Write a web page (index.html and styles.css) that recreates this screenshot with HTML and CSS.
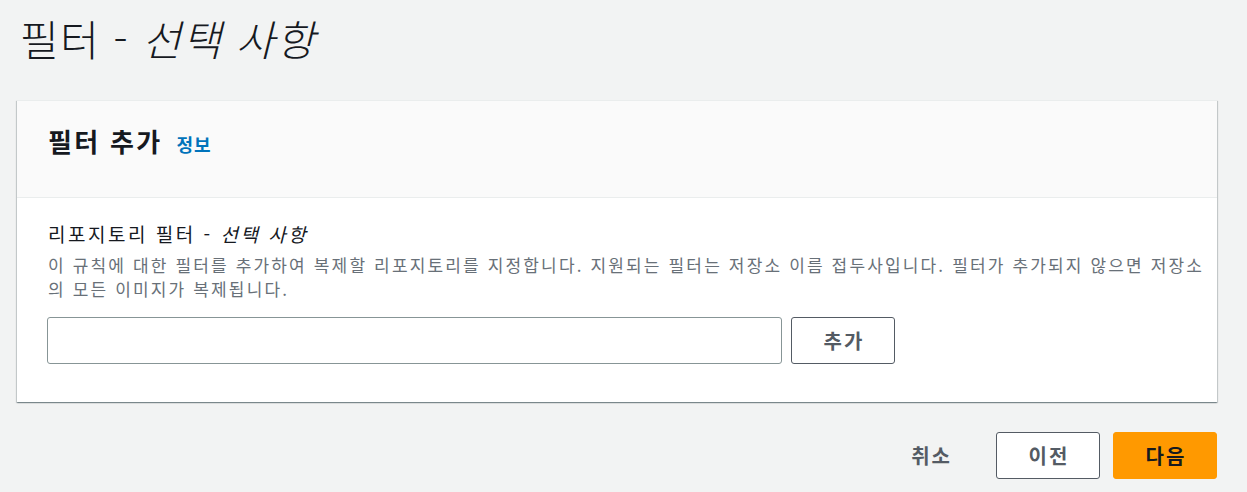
FILE: index.html
```html
<!DOCTYPE html>
<html lang="ko">
<head>
<meta charset="utf-8">
<link rel="stylesheet" href="styles.css">
</head>
<body>
<div class="page">
  <h1 class="title">필터 - <i>선택 사항</i></h1>
  <section class="card">
    <header class="card-head">
      <h2>필터 추가</h2>
      <a class="info">정보</a>
    </header>
    <div class="card-body">
      <div class="label">리포지토리 필터 - <i>선택 사항</i></div>
      <div class="desc">이 규칙에 대한 필터를 추가하여 복제할 리포지토리를 지정합니다. 지원되는 필터는 저장소 이름 접두사입니다. 필터가 추가되지 않으면 저장소 의 모든 이미지가 복제됩니다.</div>
      <div class="row">
        <input class="input" type="text">
        <button class="btn">추가</button>
      </div>
    </div>
  </section>
  <footer class="actions">
    <button class="link-btn">취소</button>
    <button class="btn">이전</button>
    <button class="btn btn-primary">다음</button>
  </footer>
</div>
</body>
</html>
```

FILE: styles.css
```css
* { box-sizing: border-box; }
html, body { margin: 0; padding: 0; }
body {
  background: #f2f3f3;
  font-family: "Noto Sans CJK KR", "Open Sans", sans-serif;
  color: #16191f;
}
.page { padding: 0 30px 0 17px; width: 1247px; }
.title {
  margin: 0;
  padding: 8px 0 0 3px;
  height: 100px;
  font-size: 42px;
  font-weight: 300;
  line-height: 60px;
  letter-spacing: 1.5px;
}
.title i, .label i { font-style: italic; }
.card {
  width: 1200px;
  background: #fff;
  box-shadow: 0 1px 1px 0 rgba(0,28,36,.3), 1px 1px 1px 0 rgba(0,28,36,.15), -1px 1px 1px 0 rgba(0,28,36,.15);
}
.card-head {
  display: flex;
  align-items: baseline;
  gap: 14px;
  height: 98px;
  padding: 22px 31px 0;
  background: #fafafa;
  border-top: 1px solid #eaeded;
  border-bottom: 1px solid #eaeded;
}
.card-head h2 {
  margin: 0;
  font-size: 26px;
  font-weight: 700;
  line-height: 36px;
  letter-spacing: 2.3px;
}
.info {
  color: #0073bb;
  font-size: 18px;
  font-weight: 700;
  letter-spacing: 1px;
}
.card-body { padding: 22px 12px 38px 31px; }
.label {
  font-size: 19px;
  line-height: 28px;
  letter-spacing: 2.5px;
}
.desc {
  color: #687078;
  font-size: 17px;
  line-height: 24px;
  letter-spacing: 2.15px;
  margin-top: 5px;
}
.row { display: flex; gap: 9px; margin-top: 16px; }
.input {
  width: 735px;
  height: 47px;
  border: 1px solid #879596;
  border-radius: 3px;
  background: #fff;
  margin: 0 0 0 -1px;
}
.btn {
  width: 104px;
  height: 47px;
  border: 1px solid #545b64;
  border-radius: 3px;
  background: #fff;
  color: #545b64;
  font-family: inherit;
  font-size: 20px;
  font-weight: 700;
  letter-spacing: 2px;
  padding: 0 0 0 2px;
}
.actions {
  display: flex;
  justify-content: flex-end;
  align-items: center;
  gap: 13px;
  width: 1200px;
  margin-top: 30px;
}
.link-btn {
  background: none;
  border: 0;
  color: #545b64;
  font-family: inherit;
  font-size: 20px;
  font-weight: 700;
  letter-spacing: 2px;
  padding: 0;
  margin-right: 31px;
}
.btn-primary {
  background: #ff9900;
  border-color: #ff9900;
  color: #16191f;
}
```
